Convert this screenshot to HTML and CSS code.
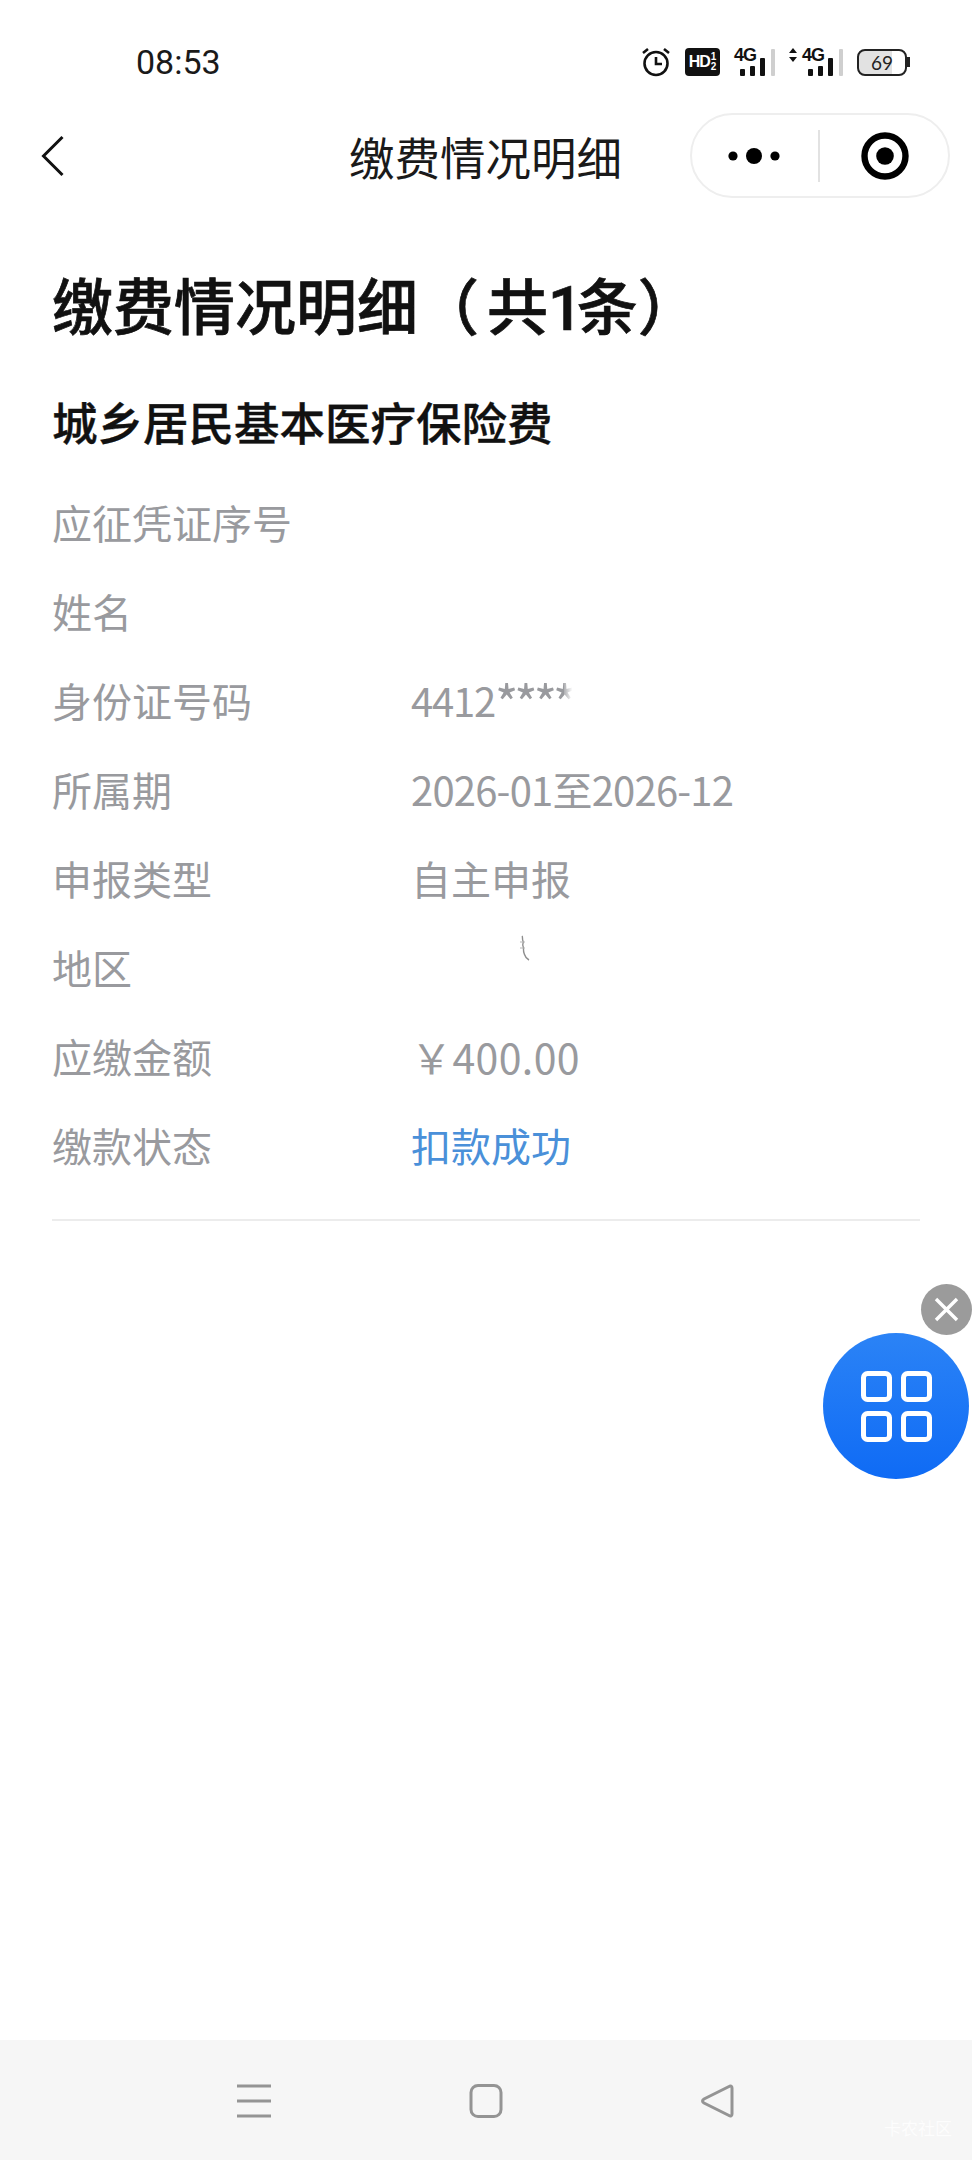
FILE: index.html
```html
<!DOCTYPE html>
<html lang="zh-CN">
<head>
    <meta charset="UTF-8">
    <meta name="viewport" content="width=device-width, initial-scale=1.0">
    <title>缴费情况明细</title>
    <link rel="stylesheet" href="styles.css">
</head>
<body>
    <div class="phone">
        <!-- status bar -->
        <div class="status-bar">
            <span class="time">08:53</span>
            <div class="status-icons">
                <svg class="ico-alarm" width="30" height="30" viewBox="0 0 30 30">
                    <circle cx="15" cy="16.500" r="11.500" fill="none" stroke="#111" stroke-width="2.600"/>
                    <path d="M15 10v7h6" fill="none" stroke="#111" stroke-width="2.600"/>
                    <path d="M2 6l5-4M28 6l-5-4" fill="none" stroke="#111" stroke-width="2.600"/>
                </svg>
                <div class="hd-badge"><span class="hd-text">HD</span><span class="hd-frac">1<br>2</span></div>
                <div class="signal">
                    <span class="net">4G</span>
                    <i class="bar b1"></i><i class="bar b2"></i><i class="bar b3"></i><i class="bar b4"></i>
                </div>
                <div class="signal">
                    <svg class="updown" width="8" height="14" viewBox="0 0 8 14">
                        <path d="M4 0l4 5H0zM4 14l4-5H0z" fill="#111"/>
                    </svg>
                    <span class="net">4G</span>
                    <i class="bar b1"></i><i class="bar b2"></i><i class="bar b3"></i><i class="bar b4"></i>
                </div>
                <div class="battery">
                    <div class="battery-body"><span>69</span></div>
                    <i class="battery-tip"></i>
                </div>
            </div>
        </div>

        <!-- nav bar -->
        <div class="nav-bar">
            <svg class="back" width="24" height="44" viewBox="0 0 24 44">
                <path d="M21.500 3L2.500 22l19 19" fill="none" stroke="#111" stroke-width="3"/>
            </svg>
            <div class="nav-title">缴费情况明细</div>
            <div class="capsule">
                <div class="capsule-part">
                    <svg width="56" height="20" viewBox="0 0 56 20">
                        <circle cx="6" cy="10" r="4.600" fill="#000"/>
                        <circle cx="27" cy="10" r="8" fill="#000"/>
                        <circle cx="48" cy="10" r="4.600" fill="#000"/>
                    </svg>
                </div>
                <i class="capsule-line"></i>
                <div class="capsule-part target">
                    <svg width="50" height="50" viewBox="0 0 50 50">
                        <circle cx="25" cy="25" r="20.500" fill="none" stroke="#000" stroke-width="6.400"/>
                        <circle cx="25" cy="25" r="8.800" fill="#000"/>
                    </svg>
                </div>
            </div>
        </div>

        <!-- content -->
        <div class="content">
            <h1>缴费情况明细<span class="paren">（</span>共<span class="one">1</span>条）</h1>
            <h2>城乡居民基本医疗保险费</h2>
            <div class="rows">
                <div class="row"><span class="label">应征凭证序号</span><span class="value"></span></div>
                <div class="row"><span class="label">姓名</span><span class="value"></span></div>
                <div class="row"><span class="label">身份证号码</span><span class="value id-no">4412<span class="stars">****</span><i class="id-mask"></i></span></div>
                <div class="row"><span class="label">所属期</span><span class="value period">2026-01至2026-12</span></div>
                <div class="row"><span class="label">申报类型</span><span class="value">自主申报</span></div>
                <div class="row"><span class="label">地区</span><span class="value">
                    <svg class="scrap" width="12" height="30" viewBox="0 0 12 30">
                        <path d="M3 1c1 1 0 3 1 5s-1 3 0 5 0 4 1 7 1 5 5 7" fill="none" stroke="#8d8d8d" stroke-width="1.400"/>
                        <path d="M1 7h5M1 13h5" fill="none" stroke="#b5b5b5" stroke-width="1"/>
                    </svg>
                </span></div>
                <div class="row"><span class="label">应缴金额</span><span class="value money">￥400.00</span></div>
                <div class="row"><span class="label">缴款状态</span><span class="value ok">扣款成功</span></div>
            </div>
            <div class="divider"></div>
        </div>

        <!-- floating button -->
        <div class="fab-close">
            <svg width="51" height="51" viewBox="0 0 51 51">
                <path d="M15 15l21 21M36 15L15 36" fill="none" stroke="#fff" stroke-width="3.400"/>
            </svg>
        </div>
        <div class="fab">
            <svg width="71" height="71" viewBox="0 0 71 71">
                <rect x="2.500" y="2.500" width="26" height="26" rx="4" fill="none" stroke="#fff" stroke-width="5"/>
                <rect x="42.500" y="2.500" width="26" height="26" rx="4" fill="none" stroke="#fff" stroke-width="5"/>
                <rect x="2.500" y="42.500" width="26" height="26" rx="4" fill="none" stroke="#fff" stroke-width="5"/>
                <rect x="42.500" y="42.500" width="26" height="26" rx="4" fill="none" stroke="#fff" stroke-width="5"/>
            </svg>
        </div>

        <!-- android buttons -->
        <div class="sys-bar">
            <svg width="34" height="34" viewBox="0 0 34 34">
                <path d="M0 2h34M0 17h34M0 32h34" fill="none" stroke="#949494" stroke-width="3"/>
            </svg>
            <svg width="34" height="34" viewBox="0 0 34 34">
                <rect x="2" y="1.500" width="30" height="31" rx="7" fill="none" stroke="#949494" stroke-width="3"/>
            </svg>
            <svg width="34" height="34" viewBox="0 0 34 34">
                <path d="M29 2.500c1.500-1 3-.3 3 1.500v26c0 1.800-1.500 2.500-3 1.500L4 19c-2-1.300-2-2.700 0-4z" fill="none" stroke="#949494" stroke-width="3"/>
            </svg>
            <span class="watermark">卡农社区</span>
        </div>
    </div>
</body>
</html>
```

FILE: styles.css
```css
* {
    box-sizing: border-box;
}

body {
    margin: 0;
    background-color: #fff;
    font-family: "Noto Sans CJK SC", "Noto Sans", sans-serif;
    color: #111;
}

.phone {
    position: relative;
    width: 972px;
    height: 2160px;
    overflow: hidden;
    display: flex;
    flex-direction: column;
}

/* status bar */
.status-bar {
    height: 113px;
    padding: 43px 62px 0 136px;
    display: flex;
    justify-content: space-between;
    align-items: flex-start;
}

.time {
    font-family: Roboto, sans-serif;
    font-size: 34px;
    line-height: 38px;
    color: #1a1a1a;
}

.status-icons {
    display: flex;
    align-items: center;
    gap: 14px;
    height: 38px;
}

.hd-badge {
    width: 35px;
    height: 28px;
    background-color: #111;
    border-radius: 4px;
    color: #fff;
    display: flex;
    align-items: center;
    justify-content: center;
    font-family: "Liberation Sans", sans-serif;
    font-weight: 700;
}

.hd-text {
    font-size: 16px;
    letter-spacing: -1px;
}

.hd-frac {
    font-size: 10px;
    line-height: 10px;
    margin-left: 1px;
}

.signal {
    height: 28px;
    display: flex;
    align-items: flex-end;
    gap: 5px;
}

.net {
    font-family: "Liberation Sans", sans-serif;
    font-size: 18px;
    font-weight: 700;
    line-height: 15px;
    letter-spacing: -1px;
    align-self: flex-start;
    width: 21px;
    margin-right: -20px;
}

.updown {
    align-self: flex-start;
    display: block;
}

.bar {
    display: block;
    width: 5px;
    background-color: #111;
    border-radius: 1px;
}

.b1 {
    height: 7px;
}

.b2 {
    height: 10px;
}

.b3 {
    height: 18px;
}

.b4 {
    height: 27px;
    width: 4px;
    background-color: #cfcfcf;
    margin-left: 1px;
}

.battery {
    display: flex;
    align-items: center;
}

.battery-body {
    width: 50px;
    height: 27px;
    border: 2.500px solid #222;
    border-radius: 8px;
    background: linear-gradient(to right, #e2e2e2 72%, #fff 72%);
    display: flex;
    align-items: center;
    justify-content: center;
    font-family: Lato, sans-serif;
    font-size: 19px;
    color: #222;
}

.battery-tip {
    width: 3px;
    height: 10px;
    background-color: #222;
}

/* nav bar */
.nav-bar {
    height: 85px;
    padding: 0 22px 0 41px;
    display: grid;
    grid-template-columns: 240px 1fr 260px;
    align-items: center;
}

.back {
    display: block;
}

.nav-title {
    font-size: 45.500px;
    line-height: 60px;
    text-align: center;
    white-space: nowrap;
    color: #1a1a1a;
}

.capsule {
    height: 85px;
    border: 2px solid #eee;
    border-radius: 43px;
    display: flex;
    align-items: center;
}

.capsule-part {
    flex: 1;
    display: flex;
    align-items: center;
    justify-content: center;
}

.target {
    padding-left: 3px;
}

.capsule-line {
    width: 2px;
    height: 52px;
    background-color: #e2e2e2;
}

/* content */
.content {
    padding: 0 52px;
    flex: 1;
}

h1 {
    margin: 64px 0 0;
    font-size: 61px;
    line-height: 84px;
    font-weight: 500;
    -webkit-text-stroke: 0.700px #111;
    color: #111;
    white-space: nowrap;
}

.paren {
    margin-right: 8px;
}

.one {
    font-family: Roboto, sans-serif;
    font-weight: 500;
    letter-spacing: -6px;
}

h2 {
    margin: 38px 0 0;
    font-size: 45.500px;
    line-height: 64px;
    font-weight: 500;
    -webkit-text-stroke: 0.400px #111;
    color: #111;
}

.rows {
    margin-top: 24px;
}

.row {
    height: 89px;
    display: flex;
    align-items: center;
    font-size: 40px;
    color: #999a9e;
}

.label {
    width: 359px;
    flex: none;
}

.value {
    position: relative;
    white-space: nowrap;
}

.id-no {
    letter-spacing: -1.200px;
}

.stars {
    font-size: 50px;
    line-height: 40px;
    letter-spacing: -4px;
    vertical-align: -6px;
}

.id-mask {
    position: absolute;
    right: -6px;
    top: 0;
    bottom: 0;
    width: 14px;
    background: linear-gradient(to right, rgba(255, 255, 255, 0.2), #fff 60%);
}

.period {
    letter-spacing: -0.800px;
}

.scrap {
    display: block;
    position: absolute;
    left: 108px;
    top: -32px;
}

.money {
    font-size: 41px;
    letter-spacing: 0.400px;
}

.ok {
    color: #4a90d9;
}

.divider {
    height: 2px;
    margin-top: 30px;
    background-color: #ececec;
}

/* floating button */
.fab-close {
    position: absolute;
    left: 921px;
    top: 1284px;
    width: 51px;
    height: 51px;
    border-radius: 50%;
    background-color: #9b9b9b;
}

.fab-close svg,
.fab svg {
    display: block;
}

.fab {
    position: absolute;
    left: 823px;
    top: 1333px;
    width: 146px;
    height: 146px;
    border-radius: 50%;
    background: linear-gradient(to bottom, #2b83f6, #0f6bf5);
    display: flex;
    align-items: center;
    justify-content: center;
}

/* android buttons */
.sys-bar {
    position: relative;
    height: 120px;
    flex: none;
    background-color: #f6f6f6;
    padding: 44px 238px 0 237px;
    display: flex;
    justify-content: space-between;
    align-items: flex-start;
}

.watermark {
    position: absolute;
    left: 884px;
    top: 76px;
    font-size: 17px;
    line-height: 24px;
    color: #fff;
    opacity: 0.8;
}
```
